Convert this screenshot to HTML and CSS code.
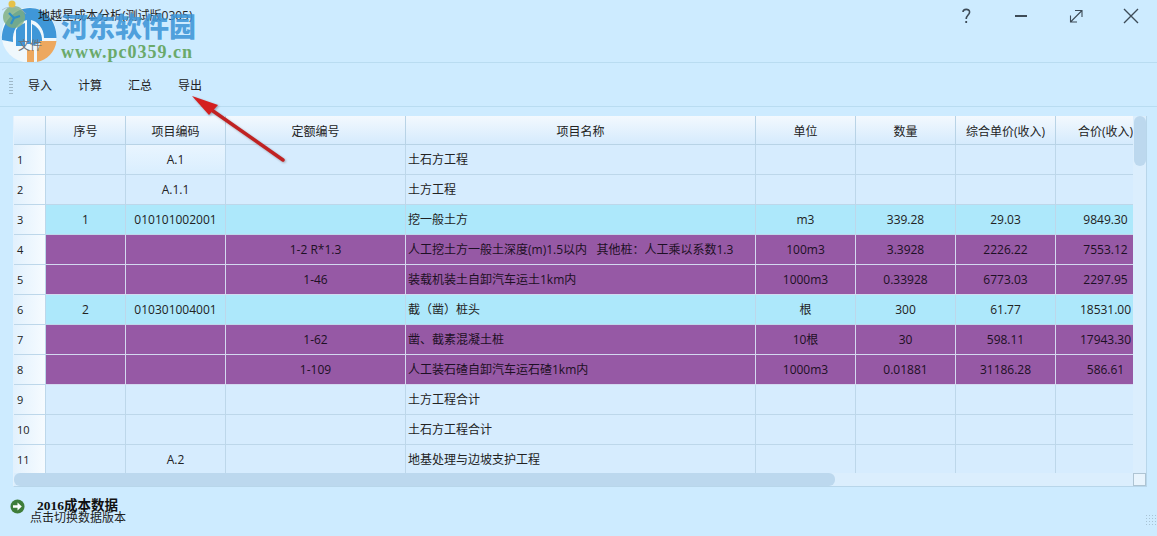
FILE: index.html
```html
<!DOCTYPE html>
<html lang="zh">
<head>
<meta charset="utf-8">
<title>地越星成本分析</title>
<link rel="stylesheet" href="styles.css">
</head>
<body>
<div class="app">
  <svg class="logo" width="60" height="64" viewBox="0 0 60 64">
    <circle cx="29" cy="35" r="27.5" fill="#f4f9fc" opacity=".9"/>
    <path d="M2 40 C1 24 13 8 30 8 C45 8 57 21 56.5 38 L44 38 C44 28 37 21 31 20 L31 44 L27 44 L27 20 C18 22 12 30 13 42 Z" fill="#3f97d8"/>
    <path d="M16 46 L16 30 C18 26 22 24 25 23 L25 46 Z" fill="#3f97d8"/>
    <path d="M32 46 L32 24 C38 27 42 33 42 40 L42 42 L32 46 Z" fill="#3f97d8"/>
    <path d="M40 41 H56.5 C55 52 47 60 37 62 V50 C39 48 40 45 40 41 Z" fill="#eda85f"/>
    <path d="M27 50 H34 V62 H27 Z" fill="#eda85f"/>
    <circle cx="14" cy="17" r="11" fill="#7fae7c" opacity=".8"/>
    <path d="M9 13 L14 18 L11 24 M14 18 L20 16" stroke="#2f8fc8" stroke-width="2.2" fill="none"/>
    <path d="M2 10 C10 4 22 8 26 14" stroke="#9fb0bc" stroke-width=".7" fill="none"/>
    <circle cx="12" cy="4" r="3.5" fill="#e6c14a"/>
  </svg>
  <header class="titlebar">
    <div class="title">地越星成本分析(测试版0305)</div>
    <div class="menu-file">文件</div>
    <div class="winctl">
      <svg class="ctl" width="16" height="18" viewBox="0 0 16 18"><path d="M5 5 C5 1.6 11.6 1.4 11.6 5 C11.6 8 8.2 8 8.2 12" fill="none" stroke="#3d4b57" stroke-width="1.6"/><rect x="7.3" y="14" width="1.8" height="2" fill="#3d4b57"/></svg>
      <svg class="ctl" width="16" height="18" viewBox="0 0 16 18"><rect x="2" y="8" width="12" height="2" fill="#3d4b57"/></svg>
      <svg class="ctl" width="16" height="18" viewBox="0 0 16 18"><path d="M3 14.5 L13.5 4 M7 3.5 H14 V10 M2.5 8.5 V15 H9" fill="none" stroke="#3d4b57" stroke-width="1.1"/></svg>
      <svg class="ctl" width="16" height="18" viewBox="0 0 16 18"><path d="M1 2 L15 16 M15 2 L1 16" fill="none" stroke="#3d4b57" stroke-width="1.4"/></svg>
    </div>
  </header>
  <nav class="toolbar">
    <span class="grip"></span>
    <button class="tool">导入</button>
    <button class="tool">计算</button>
    <button class="tool">汇总</button>
    <button class="tool">导出</button>
  </nav>
  <main class="grid-wrap">
    <div class="grid">
      <table>
        <colgroup>
          <col class="c0"><col class="c1"><col class="c2"><col class="c3"><col class="c4"><col class="c5"><col class="c6"><col class="c7"><col class="c8">
        </colgroup>
        <thead>
          <tr><th></th><th>序号</th><th>项目编码</th><th>定额编号</th><th>项目名称</th><th>单位</th><th>数量</th><th>综合单价(收入)</th><th>合价(收入)</th></tr>
        </thead>
        <tbody>
          <tr><th class="rh">1</th><td></td><td class="bright">A.1</td><td></td><td class="name">土石方工程</td><td></td><td></td><td></td><td></td></tr>
          <tr><th class="rh">2</th><td></td><td>A.1.1</td><td></td><td class="name">土方工程</td><td></td><td></td><td></td><td></td></tr>
          <tr class="cyan"><th class="rh">3</th><td>1</td><td>010101002001</td><td></td><td class="name">挖一般土方</td><td>m3</td><td>339.28</td><td>29.03</td><td>9849.30</td></tr>
          <tr class="purple"><th class="rh">4</th><td></td><td></td><td>1-2 R*1.3</td><td class="name">人工挖土方一般土深度(m)1.5以内&nbsp;&nbsp; 其他桩：人工乘以系数1.3</td><td>100m3</td><td>3.3928</td><td>2226.22</td><td>7553.12</td></tr>
          <tr class="purple"><th class="rh">5</th><td></td><td></td><td>1-46</td><td class="name">装载机装土自卸汽车运土1km内</td><td>1000m3</td><td>0.33928</td><td>6773.03</td><td>2297.95</td></tr>
          <tr class="cyan"><th class="rh">6</th><td>2</td><td>010301004001</td><td></td><td class="name">截（凿）桩头</td><td>根</td><td>300</td><td>61.77</td><td>18531.00</td></tr>
          <tr class="purple"><th class="rh">7</th><td></td><td></td><td>1-62</td><td class="name">凿、截素混凝土桩</td><td>10根</td><td>30</td><td>598.11</td><td>17943.30</td></tr>
          <tr class="purple"><th class="rh">8</th><td></td><td></td><td>1-109</td><td class="name">人工装石碴自卸汽车运石碴1km内</td><td>1000m3</td><td>0.01881</td><td>31186.28</td><td>586.61</td></tr>
          <tr><th class="rh">9</th><td></td><td></td><td></td><td class="name">土方工程合计</td><td></td><td></td><td></td><td></td></tr>
          <tr><th class="rh">10</th><td></td><td></td><td></td><td class="name">土石方工程合计</td><td></td><td></td><td></td><td></td></tr>
          <tr><th class="rh">11</th><td></td><td>A.2</td><td></td><td class="name">地基处理与边坡支护工程</td><td></td><td></td><td></td><td></td></tr>
        </tbody>
      </table>
      <div class="vbar-track"><div class="vbar"></div></div>
      <div class="hbar-track"><div class="hbar"></div></div>
      <div class="corner"></div>
    </div>
  </main>
  <footer class="status">
    <svg class="go" width="15" height="15" viewBox="0 0 15 15"><circle cx="7.5" cy="7.5" r="7" fill="#3f7d3a"/><path d="M3 6.2 H7.5 V3.5 L11.8 7.5 L7.5 11.5 V8.8 H3 Z" fill="#fff"/></svg>
    <div class="status-text">
      <div class="st-main">2016成本数据</div>
      <div class="st-sub">点击切换数据版本</div>
    </div>
    <div class="sizegrip"></div>
  </footer>

  <div class="wm wm-cn">河东软件园</div>
  <div class="wm wm-url">www.pc0359.cn</div>

  <svg class="arrow" width="110" height="80" viewBox="0 0 110 80">
    <path d="M95 67 L25 18" stroke="#c02222" stroke-width="3.5" stroke-linecap="round" fill="none"/>
    <path d="M4 3 L30 12 L21 22 Z" fill="#d41f20"/>
  </svg>
</div>
</body>
</html>
```
FILE: styles.css
```css
* { box-sizing: border-box; }
html, body { margin: 0; padding: 0; }
body {
  width: 1157px;
  height: 536px;
  overflow: hidden;
  background: #cdebff;
  font-family: "Open Sans", "Noto Sans CJK SC", sans-serif;
  font-size: 12px;
  color: #222;
}
.app { position: relative; width: 1157px; height: 536px; }

.titlebar {
  position: relative;
  height: 63px;
  border-bottom: 1px solid #b9dcf1;
  padding: 8px 18px 0 38px;
  display: flex;
  justify-content: space-between;
  align-items: flex-start;
}
.title { font-size: 12px; line-height: 16px; color: #222; }
.menu-file { position: absolute; left: 18px; top: 38px; font-size: 12px; line-height: 16px; color: #6f7378; }
.winctl { display: flex; gap: 39px; margin-top: -1px; }
.ctl { display: block; }

.toolbar {
  height: 44px;
  border-bottom: 1px solid #b9dcf1;
  display: flex;
  align-items: center;
  padding: 1px 0 0 9px;
}
.grip {
  width: 4px;
  height: 17px;
  margin-right: 2px;
  background-image: radial-gradient(#9fb8c8 0.6px, transparent 0.7px);
  background-size: 2px 3px;
}
.tool {
  width: 50px;
  height: 24px;
  padding: 0;
  border: 0;
  background: none;
  font: inherit;
  font-size: 12px;
  color: #222;
}

.grid-wrap { padding: 9px 10px 0 13px; }
.grid {
  position: relative;
  width: 1134px;
  height: 371px;
  overflow: hidden;
  background: #dbeefd;
  border-left: 1px solid #e2f1fd;
  border-bottom: 1px solid #b8d6ea;
  border-right: 1px solid #b8d6ea;
}
table { border-collapse: separate; border-spacing: 0; table-layout: fixed; width: 1142px; }
.c0 { width: 32px; }
.c1 { width: 80px; }
.c2 { width: 100px; }
.c3 { width: 180px; }
.c4 { width: 350px; }
.c5, .c6, .c7, .c8 { width: 100px; }

thead th {
  height: 29px;
  padding: 1px 0 0;
  font-weight: normal;
  font-size: 12px;
  background: linear-gradient(#f3f9fe, #d5ebfd);
  border-right: 1px solid #b8d3e6;
  border-bottom: 1px solid #b8d3e6;
  white-space: nowrap;
  overflow: hidden;
}
td, .rh {
  height: 30px;
  padding: 0 0 1px;
  border-right: 1px solid #bdd7ea;
  border-bottom: 1px solid #bdd7ea;
  text-align: center;
  white-space: nowrap;
  overflow: hidden;
  font-weight: normal;
  background: #d6ecfe;
  font-size: 12px;
}
.rh {
  text-align: left;
  padding-left: 3px;
  background: linear-gradient(90deg, #e2f1fd, #f6fbff);
  font-size: 11px;
}
td.name { text-align: left; padding-left: 2px; }
td.bright { background: linear-gradient(#e9f5ff, #d9eefe); }
.cyan td { background: #ade8fb; }
.purple td {
  background: #9659a5;
  border-color: #d4d9f0;
  color: #1d1024;
}
.vbar-track { position: absolute; top: 0; right: 0; bottom: 0; width: 13px; background: #dbeefd; }
.vbar { width: 12px; height: 50px; margin-left: 1px; border-radius: 6px; background: #bcd8ee; }
.hbar-track { position: absolute; left: 0; right: 0; bottom: 0; height: 13px; background: #dbeefd; }
.hbar { width: 821px; height: 13px; border-radius: 6px; background: #bcd8ee; }
.corner {
  position: absolute;
  right: 0;
  bottom: 0;
  width: 13px;
  height: 13px;
  background: #e8f4fd;
  border: 1px solid #aec4d3;
}

.status {
  position: relative;
  display: flex;
  align-items: flex-start;
  padding: 12px 0 0 10px;
  height: 40px;
}
.go { display: block; margin-top: 0; }
.status-text { margin-left: 5px; }
.st-main {
  padding-left: 7px;
  font-family: "Liberation Serif", "Noto Sans CJK SC", serif;
  font-weight: bold;
  font-size: 13.5px;
  line-height: 13px;
  color: #111;
}
.st-sub { font-size: 12px; line-height: 12px; color: #222; }
.sizegrip {
  position: absolute;
  right: 1px;
  bottom: 1px;
  width: 11px;
  height: 12px;
  background-image: radial-gradient(#a9c3d4 0.7px, transparent 0.8px);
  background-size: 3px 3px;
}

.logo { position: absolute; left: 0; top: 0; }
.wm { position: absolute; white-space: nowrap; }
.wm-cn {
  left: 61px;
  top: 10px;
  font-family: "Noto Sans CJK SC", sans-serif;
  font-weight: 900;
  font-size: 27px;
  line-height: 32px;
  color: rgba(62,150,216,.88);
}
.wm-url {
  left: 61px;
  top: 42px;
  font-family: "Liberation Serif", serif;
  font-weight: bold;
  font-size: 18px;
  letter-spacing: 1px;
  line-height: 20px;
  color: #6aa96a;
}
.arrow { position: absolute; left: 188px; top: 93px; filter: drop-shadow(1px 1px 1px rgba(60,30,30,.35)); }
```
